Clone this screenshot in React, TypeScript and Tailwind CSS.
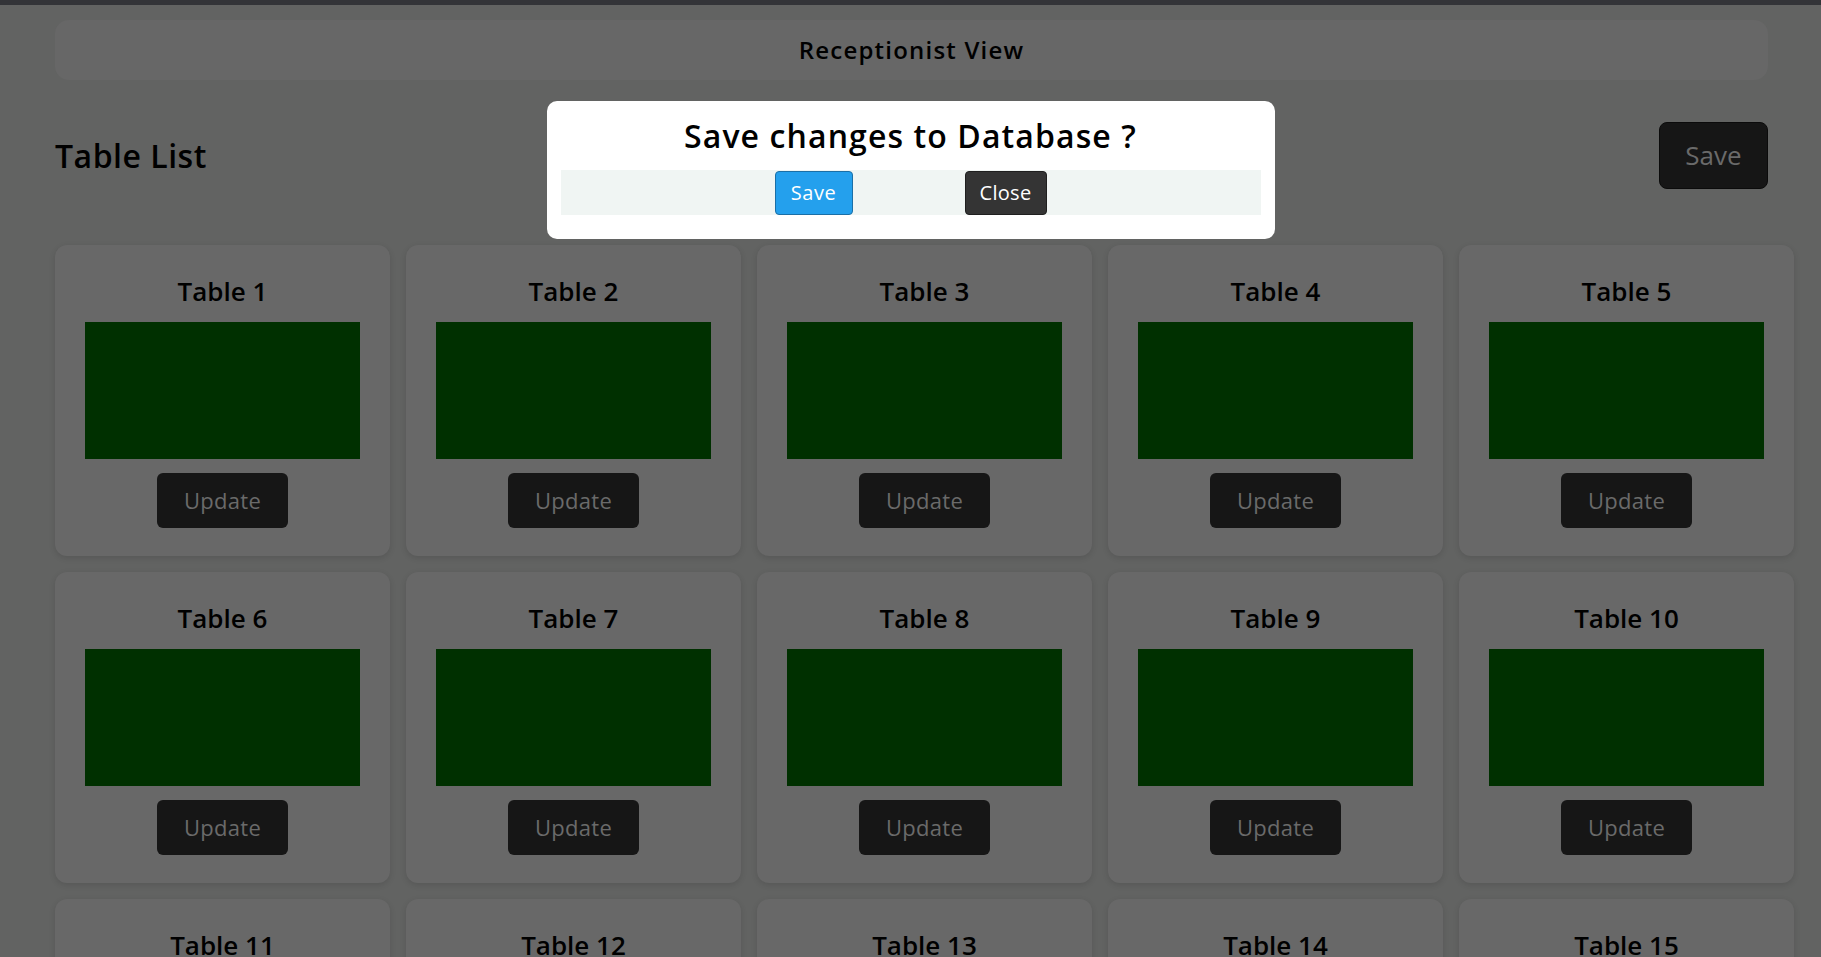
const tables = Array.from({ length: 15 }, (_, i) => i + 1)

function TableCard({ n }: { n: number }) {
  return (
    <div className="h-[311px] rounded-[12px] bg-[#686868] shadow-[0_2px_6px_rgba(0,0,0,0.12)] flex flex-col items-center pt-[30px]">
      <h3 className="text-[26px] leading-[32px] font-semibold text-black">Table {n}</h3>
      <div className="mt-[15px] w-[275px] h-[137px] bg-[#003000]" />
      <button className="mt-[14px] w-[131px] h-[55px] rounded-[6px] bg-[#161616] text-[22px] tracking-[0.3px] text-[#6a6a6a]">
        Update
      </button>
    </div>
  )
}

export default function App() {
  return (
    <div className="relative h-[957px] overflow-hidden bg-[#626362] font-['Open_Sans',sans-serif]">
      <div className="h-[5px] bg-[#333438]" />

      <div className="px-[55px] pt-[15px]">
        <div className="w-[1713px] h-[60px] rounded-[14px] bg-[#676767] flex items-center justify-center">
          <span className="text-[24px] font-semibold tracking-[1.2px] text-black">Receptionist View</span>
        </div>

        <div className="w-[1713px] mt-[42px] h-[67px] flex items-center justify-between">
          <h2 className="text-[32px] font-semibold tracking-[0.5px] text-black">Table List</h2>
          <button className="w-[109px] h-[67px] rounded-[8px] border border-[#0b0b0b] bg-[#161616] text-[26px] text-[#6a6a6a]">
            Save
          </button>
        </div>

        <div className="mt-[56px] grid grid-cols-[repeat(5,335px)] gap-4">
          {tables.map((n) => (
            <TableCard key={n} n={n} />
          ))}
        </div>
      </div>

      <div className="absolute inset-x-0 top-[101px] flex justify-center">
        <div className="w-[728px] rounded-[10px] bg-white px-[14px] pt-[15px] pb-[24px]">
          <h1 className="text-center text-[32px] leading-[40px] font-semibold tracking-[1.1px] text-black">
            Save changes to Database ?
          </h1>
          <div className="mt-[14px] h-[45px] bg-[#f0f5f3] flex items-center justify-center gap-[112px]">
            <button className="w-[78px] h-[44px] rounded-[4px] border border-[#1b6fa6] bg-[#24a0ed] text-[20px] tracking-[0.6px] text-white">
              Save
            </button>
            <button className="w-[82px] h-[44px] rounded-[4px] border border-[#1f1f1f] bg-[#343434] text-[20px] tracking-[0.3px] text-white">
              Close
            </button>
          </div>
        </div>
      </div>
    </div>
  )
}
